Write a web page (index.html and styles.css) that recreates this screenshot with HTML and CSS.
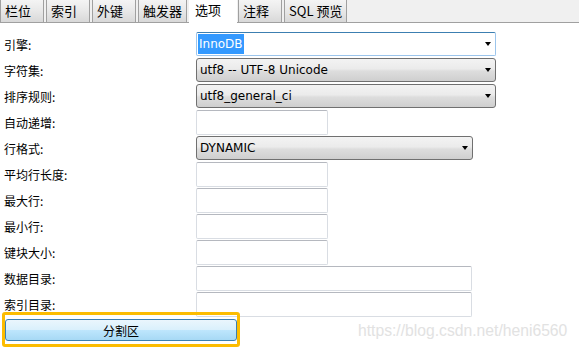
FILE: index.html
```html
<!doctype html>
<html lang="zh-CN">
<head>
    <meta charset="UTF-8">
    <title>选项</title>
    <link rel="stylesheet" href="styles.css">
</head>
<body>
    <div class="tabs">
        <div class="tab">栏位</div>
        <div class="tab">索引</div>
        <div class="tab">外键</div>
        <div class="tab">触发器</div>
        <div class="tab active">选项</div>
        <div class="tab">注释</div>
        <div class="tab">SQL 预览</div>
    </div>

    <div class="form">
        <label>引擎:</label>
        <div class="select focus wide"><span class="sel">InnoDB</span><i class="arrow"></i></div>

        <label>字符集:</label>
        <div class="select wide"><span>utf8 -- UTF-8 Unicode</span><i class="arrow"></i></div>

        <label>排序规则:</label>
        <div class="select wide"><span>utf8_general_ci</span><i class="arrow"></i></div>

        <label>自动递增:</label>
        <div class="input"></div>

        <label>行格式:</label>
        <div class="select mid"><span>DYNAMIC</span><i class="arrow"></i></div>

        <label>平均行长度:</label>
        <div class="input"></div>

        <label>最大行:</label>
        <div class="input"></div>

        <label>最小行:</label>
        <div class="input"></div>

        <label>键块大小:</label>
        <div class="input"></div>

        <label>数据目录:</label>
        <div class="input mid"></div>

        <label>索引目录:</label>
        <div class="input mid"></div>
    </div>

    <div class="btn-row">
        <button class="btn">分割区</button>
    </div>

    <div class="mark"></div>
    <div class="watermark">https://blog.csdn.net/heni6560</div>
</body>
</html>
```

FILE: styles.css
```css
*{margin:0;padding:0;box-sizing:border-box;}
body{
    background:#fff;
    font-family:"Noto Sans CJK SC","DejaVu Sans",sans-serif;
    font-size:12px;
    color:#000;
    width:579px;
    height:350px;
    position:relative;
    overflow:hidden;
}
/* 标签页 */
.tabs{
    display:flex;
    height:23px;
    background:#f0f0f0;
    border-bottom:1px solid #a0a0a0;
}
.tab{
    min-width:44px;
    height:22px;
    margin-right:2px;
    padding:0 4px;
    font-size:13px;
    line-height:22px;
    border-left:1px solid #a0a0a0;
    border-right:1px solid #a0a0a0;
    background:linear-gradient(#f4f4f4,#e8e8e8 50%,#d8d8d8);
    white-space:nowrap;
}
.tab.active{
    height:23px;
    min-width:48px;
    padding-left:6px;
    line-height:19px;
    background:#fff;
    border:none;
    margin-right:1px;
}
/* 表单 */
.form{
    display:grid;
    grid-template-columns:196px auto;
    grid-auto-rows:24px;
    row-gap:2px;
    padding-top:9px;
}
.form label{
    padding-left:4px;
    line-height:25px;
}
.select{
    display:flex;
    align-items:center;
    justify-content:space-between;
    height:24px;
    padding:0 4px 0 3px;
    border:1px solid #707070;
    border-radius:3px;
    background:linear-gradient(#f3f3f3,#ebebeb 45%,#dddddd 55%,#cfcfcf);
    font-family:"DejaVu Sans",sans-serif;
    font-size:12px;
}
.select.wide{width:300px;}
.select.mid{width:277px;}
.select.focus{
    background:#fff;
    border-color:#9cc5ec;
    border-top-color:#3c7fb1;
    border-radius:2px;
    padding-left:1px;
}
.sel{
    background:#3399ff;
    color:#fff;
    padding:2px 1px;
    line-height:16px;
}
.arrow{
    width:0;
    height:0;
    border-left:3.5px solid transparent;
    border-right:3.5px solid transparent;
    border-top:4px solid #000;
}
.input{
    width:132px;
    height:25px;
    border:1px solid #d9dde3;
    border-top-color:#b5b8bf;
    border-radius:2px;
    background:#fff;
}
.input.mid{width:276px;}
/* 按钮 */
.btn-row{
    padding:3px 0 0 5px;
}
.btn{
    display:block;
    width:232px;
    height:22px;
    border:1px solid #3c7fb1;
    border-radius:3px;
    background:linear-gradient(#eaf6fd,#d9f0fc 50%,#bee6fd 51%,#a7d9f5);
    font-family:"Noto Sans CJK SC",sans-serif;
    font-size:12px;
    color:#000;
}
/* 截图标注框 */
.mark{
    position:absolute;
    left:2px;
    top:312px;
    width:238px;
    height:35px;
    border:3px solid #fcbc00;
    border-radius:3px;
}
.watermark{
    position:absolute;
    left:358px;
    top:322px;
    font-family:"Liberation Sans",Arial,sans-serif;
    font-size:15.7px;
    color:#e2e2e2;
}
```
